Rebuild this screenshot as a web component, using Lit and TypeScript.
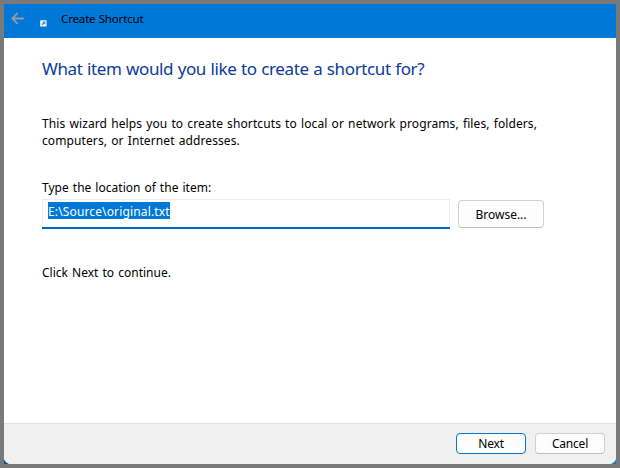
import { LitElement, html, css, svg } from "lit";
import { customElement } from "lit/decorators.js";

const backArrow = svg`<path d="M12.8 6.5H1.4M6.6 1.1L1.4 6.5L6.6 11.9" fill="none" stroke="#959ca3" stroke-width="1.8"/>`;

@customElement("app-root")
export class AppRoot extends LitElement {
  static styles = css`
    :host {
      display: block;
      box-sizing: border-box;
      width: 620px;
      height: 468px;
      padding: 4px;
      background: #797979;
      color: #000;
      font: 12px/17px "Noto Sans", "Open Sans", sans-serif;
      white-space: nowrap;
    }
    .desktop { height: 460px; background: linear-gradient(90deg, #04569c, #0b7cc9); }
    .window {
      display: flex;
      flex-direction: column;
      height: 460px;
      background: #fff;
      border-radius: 0 0 7px 7px;
      overflow: hidden;
    }
    .titlebar {
      display: flex;
      align-items: flex-start;
      height: 34px;
      background: #0078d7;
    }
    .back { width: 13px; height: 13px; margin: 8px 0 0 7px; }
    .shortcut { width: 7px; height: 7px; margin: 15.5px 0 0 16px; }
    .caption { margin: 6px 0 0 14px; font-size: 11.6px; letter-spacing: -0.2px; word-spacing: 0.4px; }
    .content { flex: 1; padding: 18px 38px 0; }
    h1 {
      margin: 0;
      font-size: 17px;
      line-height: 26px;
      font-weight: 400;
      letter-spacing: -0.38px;
      word-spacing: 0.5px;
      color: #0a3a9c;
    }
    p { margin: 0; }
    .intro { margin-top: 33px; letter-spacing: 0.1px; word-spacing: 0.9px; }
    .label { display: block; margin-top: 30px; letter-spacing: 0.03px; word-spacing: 0.8px; }
    .row { display: flex; gap: 8px; margin-top: 3px; }
    .field {
      display: flex;
      align-items: flex-start;
      box-sizing: border-box;
      width: 408px;
      height: 28px;
      padding: 2px 5px;
      border: 1px solid #ececec;
      border-bottom: 0;
      box-shadow: 0 2px 0 #0067c0;
    }
    .selected {
      height: 17px;
      line-height: 19px;
      letter-spacing: 0.14px;
      background: #0078d7;
      color: #fff;
    }
    .btn {
      box-sizing: border-box;
      display: block;
      padding: 0;
      border: 1px solid #d0d0d0;
      border-bottom-color: #bdbdbd;
      border-radius: 4px;
      background: #fdfdfd;
      color: #000;
      font: inherit;
      text-align: center;
    }
    .browse { width: 86px; height: 28px; margin-top: 1px; }
    .hint { margin-top: 36px; word-spacing: 1px; }
    .footer {
      display: flex;
      justify-content: flex-end;
      gap: 9px;
      box-sizing: border-box;
      height: 41px;
      padding: 9px 11px 0 0;
      border-top: 1px solid #dfdfdf;
      background: #f0f0f0;
    }
    .footer .btn { width: 70px; height: 21px; letter-spacing: -0.2px; }
    .footer .primary { border-color: #0078d4; }
  `;

  render() {
    return html`
      <div class="desktop">
        <div class="window">
          <div class="titlebar">
            <svg class="back" viewBox="0 0 13 13">${backArrow}</svg>
            <svg class="shortcut" viewBox="0 0 7 7">
              <rect x="0.2" y="0.2" width="6.4" height="6.4" rx="0.4" fill="#f4f5f6" />
              <path d="M2.2 1.4H5.4V4.6L4.4 3.6L2.6 5.2L1.6 4.2L3.2 2.4Z" fill="#3b8fd4" />
            </svg>
            <span class="caption">Create Shortcut</span>
          </div>
          <main class="content">
            <h1>What item would you like to create a shortcut for?</h1>
            <p class="intro">
              This wizard helps you to create shortcuts to local or network programs, files, folders,<br />
              computers, or Internet addresses.
            </p>
            <span class="label">Type the location of the item:</span>
            <div class="row">
              <div class="field"><span class="selected">E:\\Source\\original.txt</span></div>
              <button class="btn browse">Browse...</button>
            </div>
            <p class="hint">Click Next to continue.</p>
          </main>
          <footer class="footer">
            <button class="btn primary">Next</button>
            <button class="btn">Cancel</button>
          </footer>
        </div>
      </div>
    `;
  }
}
